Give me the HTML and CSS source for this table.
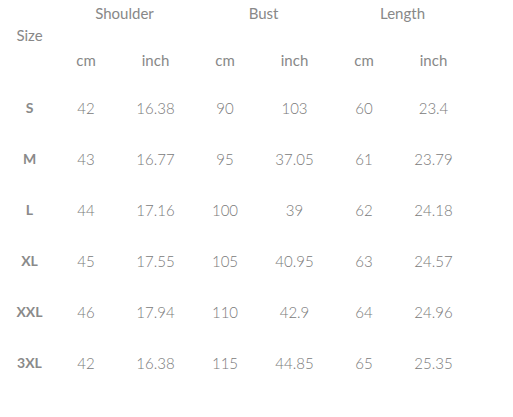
FILE: index.html
```html
<!DOCTYPE html>
<html>
<head>
<meta charset="utf-8">
<link rel="stylesheet" href="styles.css">
</head>
<body>
<table class="chart">
  <colgroup>
    <col class="c-size">
    <col class="c-cm"><col class="c-in">
    <col class="c-cm"><col class="c-in">
    <col class="c-cm"><col class="c-in">
  </colgroup>
  <thead>
    <tr class="r-group">
      <th class="size-head" rowspan="2">Size</th>
      <th colspan="2">Shoulder</th>
      <th colspan="2">Bust</th>
      <th colspan="2">Length</th>
    </tr>
    <tr class="r-unit">
      <th>cm</th><th>inch</th>
      <th>cm</th><th>inch</th>
      <th>cm</th><th>inch</th>
    </tr>
  </thead>
  <tbody>
    <tr><th class="sz">S</th><td>42</td><td>16.38</td><td>90</td><td>103</td><td>60</td><td>23.4</td></tr>
    <tr><th class="sz">M</th><td>43</td><td>16.77</td><td>95</td><td>37.05</td><td>61</td><td>23.79</td></tr>
    <tr><th class="sz">L</th><td>44</td><td>17.16</td><td>100</td><td>39</td><td>62</td><td>24.18</td></tr>
    <tr><th class="sz">XL</th><td>45</td><td>17.55</td><td>105</td><td>40.95</td><td>63</td><td>24.57</td></tr>
    <tr><th class="sz">XXL</th><td>46</td><td>17.94</td><td>110</td><td>42.9</td><td>64</td><td>24.96</td></tr>
    <tr><th class="sz">3XL</th><td>42</td><td>16.38</td><td>115</td><td>44.85</td><td>65</td><td>25.35</td></tr>
  </tbody>
</table>
</body>
</html>
```
FILE: styles.css
```css
html, body {
  margin: 0;
  background: #ffffff;
}
body {
  padding-left: 8px;
  font-family: Lato, "Open Sans", "Liberation Sans", sans-serif;
  font-size: 15px;
  color: #888888;
}
.chart {
  border-collapse: collapse;
  border-spacing: 0;
  table-layout: fixed;
  width: 464px;
}
.c-size { width: 47px; }
.c-cm { width: 62px; }
.c-in { width: 77px; }
.chart th, .chart td {
  padding: 0;
  text-align: center;
  line-height: 20px;
  font-weight: 400;
  white-space: nowrap;
}
.chart td {
  font-weight: 300;
  color: #7a7a7a;
}
.r-group th {
  height: 26px;
  vertical-align: middle;
}
.r-group th.size-head {
  vertical-align: top;
  padding-top: 25px;
  padding-right: 4px;
}
.r-unit th {
  height: 56px;
  box-sizing: border-box;
  vertical-align: top;
  padding-top: 24px;
}
tbody tr {
  height: 51px;
}
tbody td, tbody th {
  vertical-align: middle;
}
.chart th.sz {
  font-weight: 700;
  font-size: 14px;
  color: #8a8a8a;
  padding-right: 4px;
}
.chart th.size-head {
  font-weight: 400;
}
```
